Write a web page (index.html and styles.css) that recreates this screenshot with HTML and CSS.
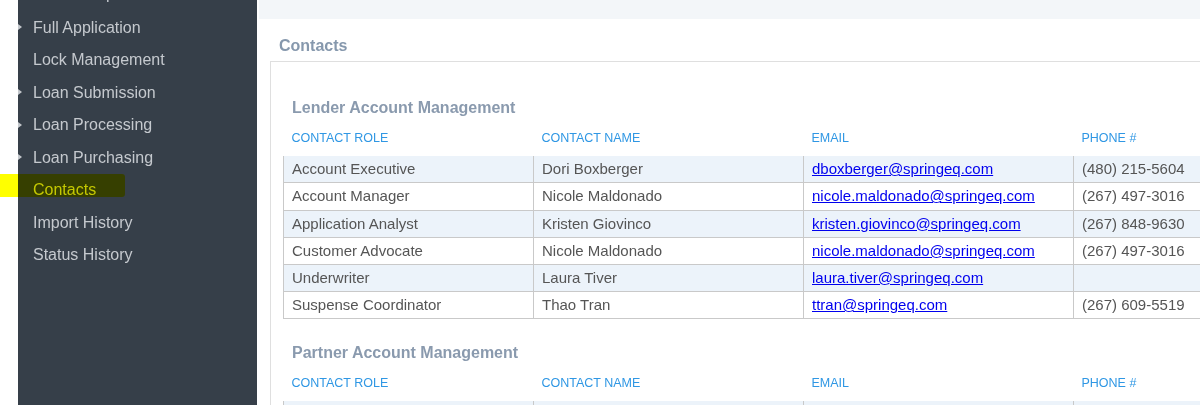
FILE: index.html
```html
<!DOCTYPE html>
<html lang="en">
<head>
<meta charset="utf-8">
<title>Contacts</title>
<link rel="stylesheet" href="styles.css">
</head>
<body>
<div class="app">
  <aside class="sidebar">
    <ul class="nav">
      <li class="nav-item nav-item-partial">Loan Setup</li>
      <li class="nav-item has-sub">Full Application</li>
      <li class="nav-item">Lock Management</li>
      <li class="nav-item has-sub">Loan Submission</li>
      <li class="nav-item has-sub">Loan Processing</li>
      <li class="nav-item has-sub">Loan Purchasing</li>
      <li class="nav-item">Contacts</li>
      <li class="nav-item">Import History</li>
      <li class="nav-item">Status History</li>
    </ul>
  </aside>
  <main class="main">
    <div class="topbar"></div>
    <h1 class="page-title">Contacts</h1>
    <div class="panel">
      <section class="section">
        <h2 class="section-title">Lender Account Management</h2>
        <table class="contacts">
          <colgroup><col class="c-role"><col class="c-name"><col class="c-email"><col class="c-phone"></colgroup>
          <thead>
            <tr><th>Contact Role</th><th>Contact Name</th><th>Email</th><th>Phone #</th></tr>
          </thead>
          <tbody>
            <tr><td>Account Executive</td><td>Dori Boxberger</td><td><a href="#">dboxberger@springeq.com</a></td><td>(480) 215-5604</td></tr>
            <tr><td>Account Manager</td><td>Nicole Maldonado</td><td><a href="#">nicole.maldonado@springeq.com</a></td><td>(267) 497-3016</td></tr>
            <tr><td>Application Analyst</td><td>Kristen Giovinco</td><td><a href="#">kristen.giovinco@springeq.com</a></td><td>(267) 848-9630</td></tr>
            <tr><td>Customer Advocate</td><td>Nicole Maldonado</td><td><a href="#">nicole.maldonado@springeq.com</a></td><td>(267) 497-3016</td></tr>
            <tr><td>Underwriter</td><td>Laura Tiver</td><td><a href="#">laura.tiver@springeq.com</a></td><td></td></tr>
            <tr><td>Suspense Coordinator</td><td>Thao Tran</td><td><a href="#">ttran@springeq.com</a></td><td>(267) 609-5519</td></tr>
          </tbody>
        </table>
      </section>
      <section class="section section-next">
        <h2 class="section-title">Partner Account Management</h2>
        <table class="contacts">
          <colgroup><col class="c-role"><col class="c-name"><col class="c-email"><col class="c-phone"></colgroup>
          <thead>
            <tr><th>Contact Role</th><th>Contact Name</th><th>Email</th><th>Phone #</th></tr>
          </thead>
          <tbody>
            <tr><td>Account Executive</td><td>&nbsp;</td><td></td><td></td></tr>
            <tr><td>Account Manager</td><td></td><td></td><td></td></tr>
          </tbody>
        </table>
      </section>
    </div>
  </main>
  <div class="highlight"></div>
</div>
</body>
</html>
```

FILE: styles.css
```css
html, body {
  margin: 0;
  padding: 0;
  height: 100%;
  overflow: hidden;
  background: #ffffff;
}

body {
  font-family: "Liberation Sans", Arial, sans-serif;
}

.app {
  position: relative;
  display: flex;
  height: 405px;
}

.sidebar {
  flex: 0 0 239px;
  margin-left: 18px;
  background: #363f49;
  overflow: hidden;
}

.nav {
  list-style: none;
  margin: -20.5px 0 0;
  padding: 0;
}

.nav-item {
  position: relative;
  height: 32.46px;
  line-height: 32.46px;
  padding-left: 15px;
  font-size: 16px;
  color: #c5c9ce;
  white-space: nowrap;
}

.nav-item-partial {
  height: 28.46px;
  line-height: 28.46px;
  padding-bottom: 4px;
}

.has-sub::before {
  content: "";
  position: absolute;
  left: 0;
  top: 50%;
  margin-top: -4px;
  border-left: 4px solid #c3c7cc;
  border-top: 3.5px solid transparent;
  border-bottom: 3.5px solid transparent;
}

.main {
  flex: 1 1 auto;
  min-width: 0;
  overflow: hidden;
}

.topbar {
  height: 18.6px;
  margin-left: 2px;
  background: #f3f6f9;
}

.page-title {
  margin: 17.6px 0 4.8px 22px;
  font-size: 16px;
  line-height: 20px;
  font-weight: bold;
  color: #8698ad;
}

.panel {
  margin-left: 13px;
  border-top: 1px solid #dfdfdf;
  border-left: 1px solid #dfdfdf;
  padding: 36.2px 0 0 12px;
}

.section-next {
  margin-top: 24px;
}

.section-title {
  margin: 0 0 0 9px;
  font-size: 16px;
  line-height: 20px;
  font-weight: bold;
  color: #8a9aae;
}

.contacts {
  border-collapse: collapse;
  table-layout: fixed;
  width: 940px;
}

.c-role { width: 250px; }
.c-name { width: 270px; }
.c-email { width: 270px; }
.c-phone { width: 150px; }

.contacts th {
  text-align: left;
  font-weight: normal;
  font-size: 12.5px;
  line-height: 15px;
  text-transform: uppercase;
  color: #2f97e4;
  padding: 13px 8px 10px;
  white-space: nowrap;
}

.contacts td {
  font-size: 15px;
  line-height: 18.2px;
  padding: 4px 8px;
  color: #555555;
  border: 1px solid #c9c9c9;
  white-space: nowrap;
}

.contacts tbody tr:first-child td {
  border-top: hidden;
}

.contacts tbody tr:nth-child(odd) {
  background: #ecf3fa;
}

.contacts a {
  color: #0000ee;
  text-decoration: underline;
}

.highlight {
  position: absolute;
  left: 0;
  top: 174px;
  width: 125px;
  height: 23px;
  background: #ffff00;
  mix-blend-mode: multiply;
  border-radius: 0 3px 3px 0;
}
```
